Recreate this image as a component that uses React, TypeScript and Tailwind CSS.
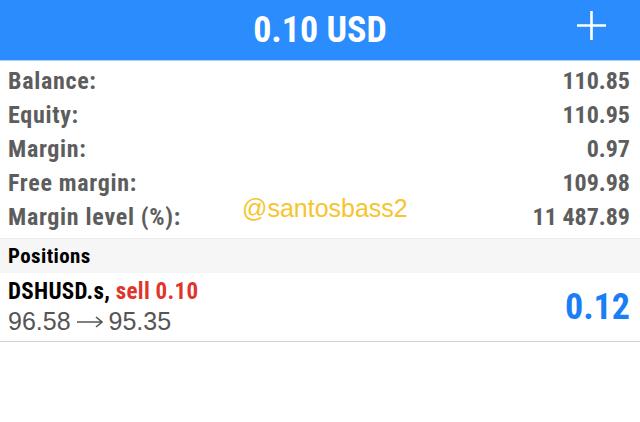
const narrow = "font-['Liberation_Sans_Narrow','Roboto_Condensed','DejaVu_Sans_Condensed',sans-serif]";
const plain = "font-['Liberation_Sans',Arial,sans-serif]";

const rows = [
  { label: "Balance:", value: "110.85" },
  { label: "Equity:", value: "110.95" },
  { label: "Margin:", value: "0.97" },
  { label: "Free margin:", value: "109.98" },
  { label: "Margin level (%):", value: "11 487.89" },
];

const App = () => {
  return (
    <div className="relative w-[640px] h-[422px] bg-white overflow-hidden">
      <header className="relative h-[60px] bg-[#2a8cfd] flex items-center justify-center border-b border-[#a9cdf5] box-content">
        <h1 className={`${narrow} font-bold text-white text-[36px] leading-none`}>0.10 USD</h1>
        {/* plus button */}
        <svg className="absolute left-[577px] top-[11px]" width="29" height="29" viewBox="0 0 29 29">
          <path d="M14.5 0V29M0 14.5H29" stroke="white" strokeWidth="2.6" />
        </svg>
      </header>

      <div className={`${narrow} font-bold text-[#5d5d5d] pt-[3px] pb-[4px] pl-[8px] pr-[10px]`}>
        {rows.map((r) => (
          <div key={r.label} className="flex justify-between h-[34px] text-[24px] leading-[34px]">
            <span className="tracking-[0.7px]">{r.label}</span>
            <span>{r.value}</span>
          </div>
        ))}
      </div>

      <div className="bg-[#f6f6f6] border-t border-[#ececec] h-[35px] pl-[8px] flex items-center">
        <span className={`${narrow} font-bold text-black text-[21px] tracking-[0.4px] pt-[2px]`}>Positions</span>
      </div>

      <div className="flex items-center justify-between h-[69px] pl-[8px] pr-[10px] border-b border-[#d0d0d0]">
        <div className="flex flex-col">
          <span className={`${narrow} font-bold text-[23px] tracking-[0.3px] leading-[28px] text-black`}>
            DSHUSD.s, <span className="text-[#e0352b]">sell 0.10</span>
          </span>
          <span className={`${plain} text-[25px] leading-[30px] text-[#555555] flex items-center`}>
            96.58
            <svg className="mx-[6px] mt-[2px]" width="26" height="12" viewBox="0 0 26 12">
              <path d="M0 6H25M19 1L25 6L19 11" fill="none" stroke="#555555" strokeWidth="1.6" />
            </svg>
            95.35
          </span>
        </div>
        <span className={`${narrow} font-bold text-[36px] text-[#1a7ef6] leading-none`}>0.12</span>
      </div>

      <span className={`absolute left-[242px] top-[196px] ${plain} text-[25px] text-[#f6c52e] leading-none`}>
        @santosbass2
      </span>
    </div>
  );
};

export default App;
